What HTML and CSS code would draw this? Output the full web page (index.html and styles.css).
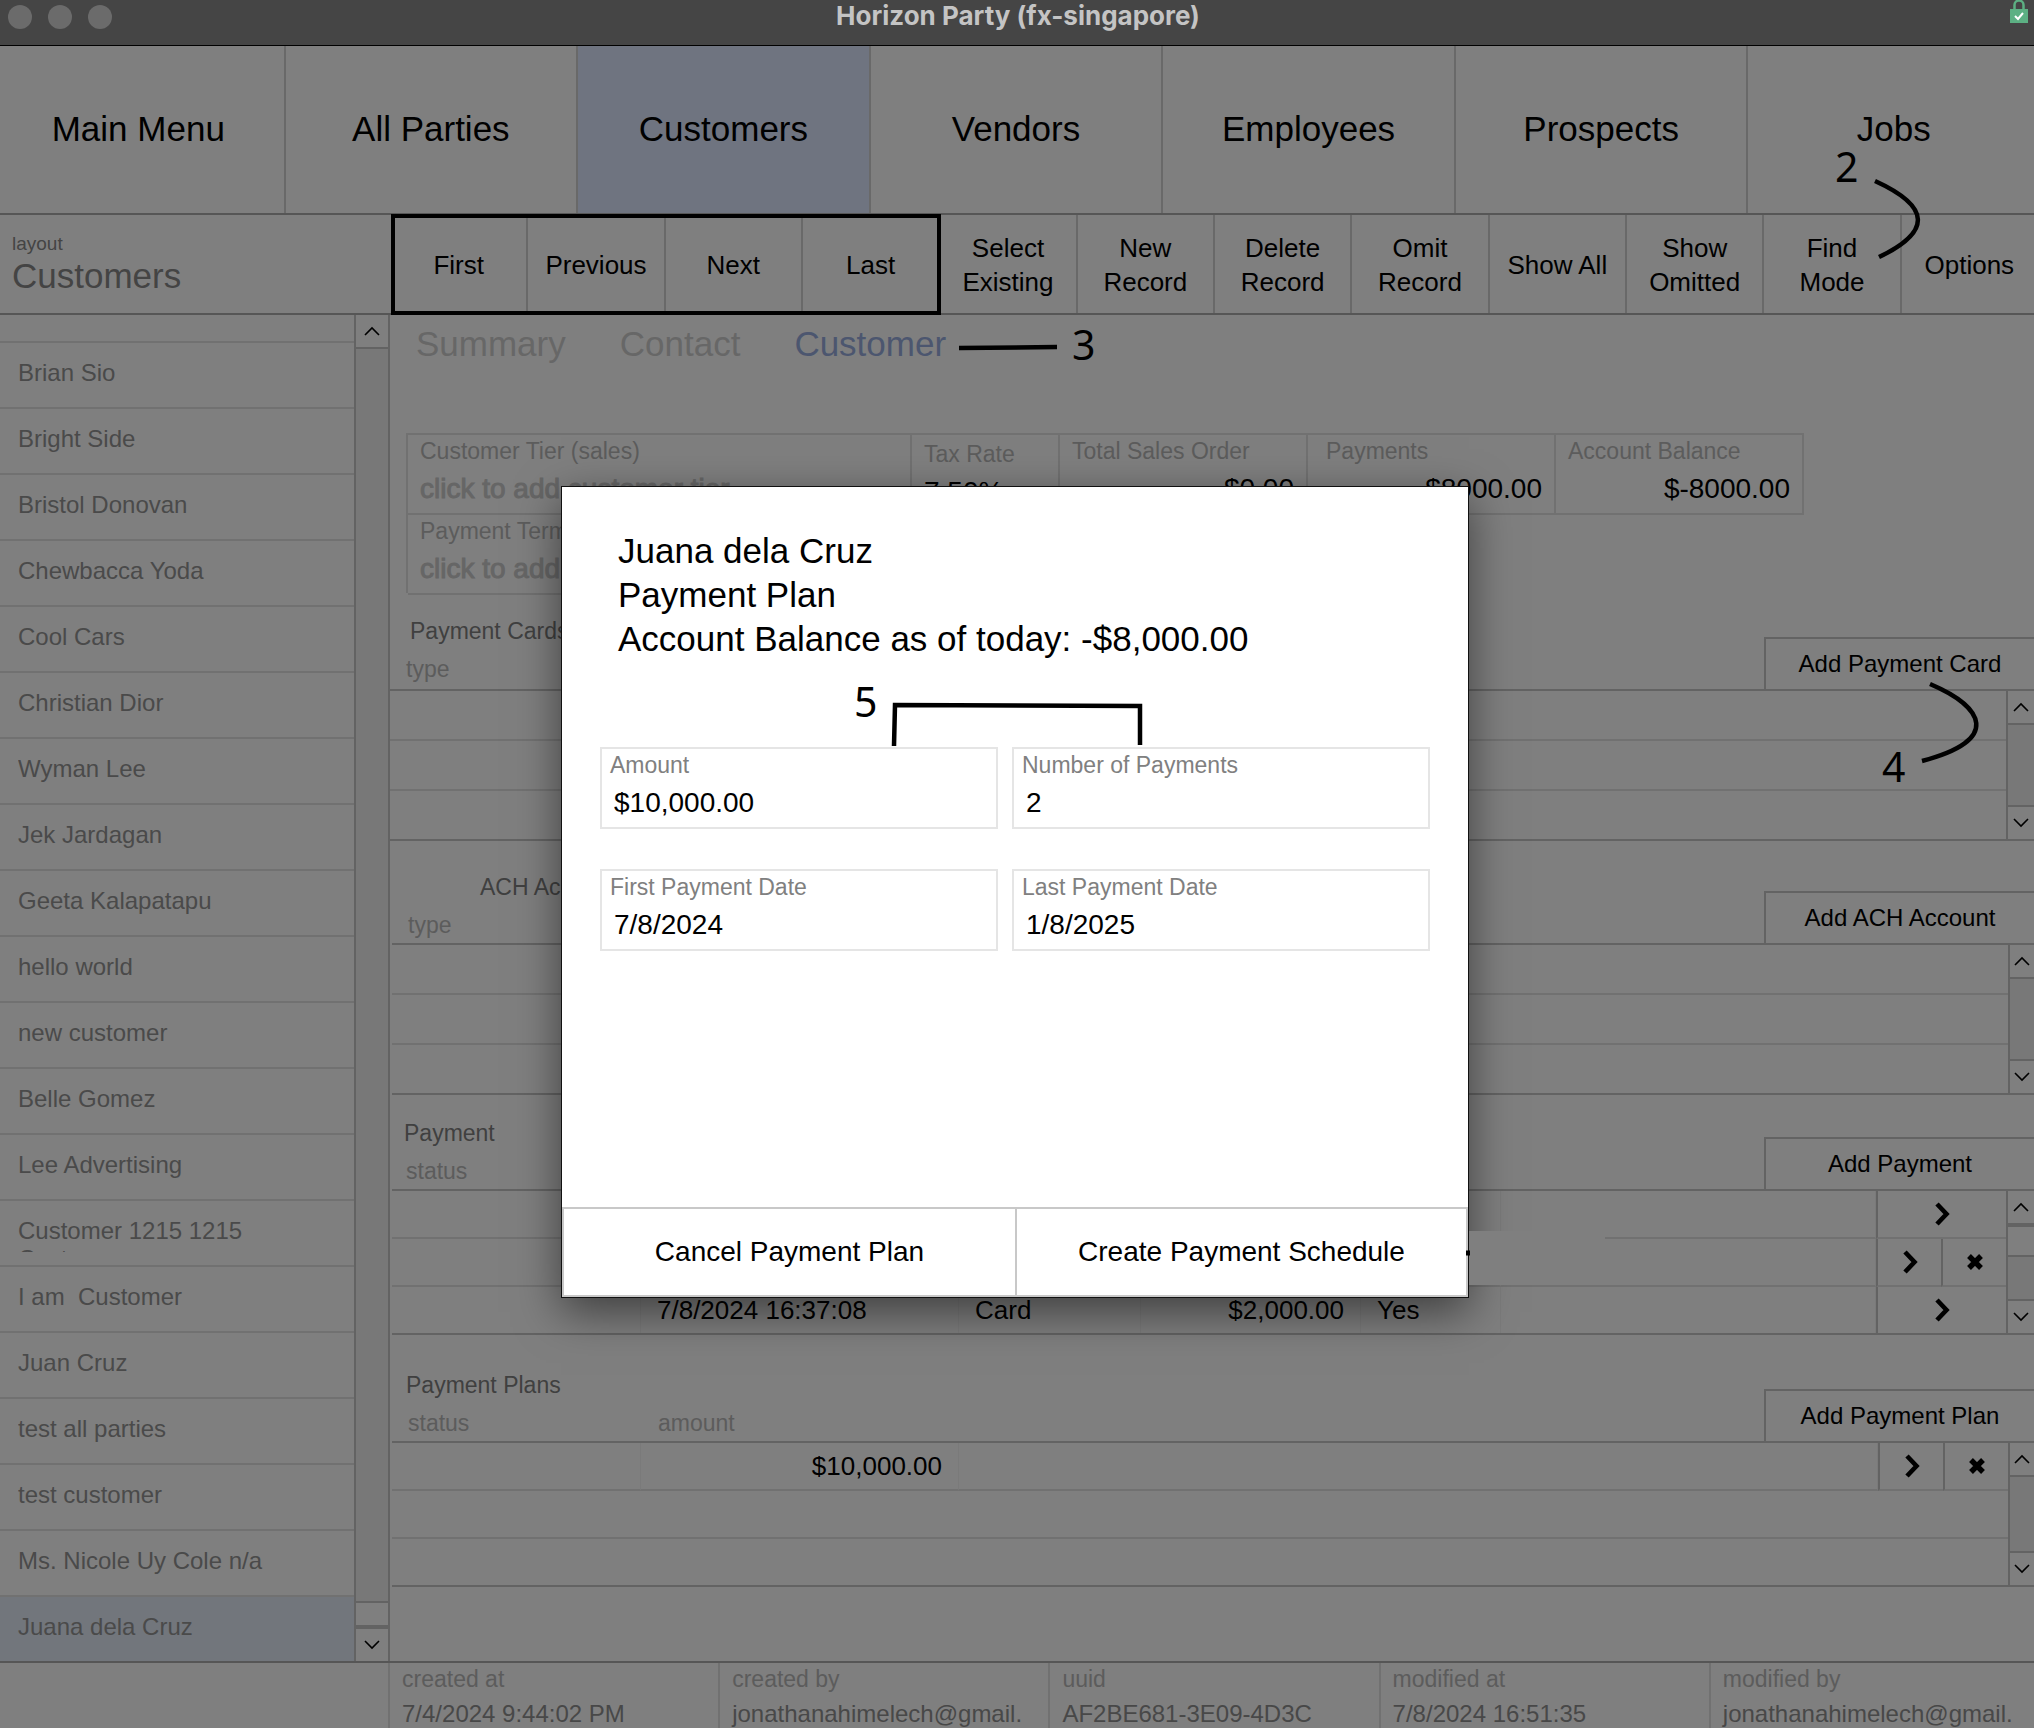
FILE: index.html
```html
<!DOCTYPE html>
<html lang="en">
<head>
<meta charset="utf-8">
<meta name="viewport" content="width=device-width, initial-scale=1">
<title>Horizon Party (fx-singapore)</title>
<link rel="stylesheet" href="styles.css">
</head>
<body>
<svg class="symbols" aria-hidden="true">
  <symbol id="up" viewBox="0 0 16 10"><path d="M1 9 8 2l7 7" fill="none" stroke="#000" stroke-width="1.6"/></symbol>
  <symbol id="down" viewBox="0 0 16 10"><path d="m1 1 7 7 7-7" fill="none" stroke="#000" stroke-width="1.6"/></symbol>
  <symbol id="go" viewBox="0 0 16 24"><path d="m3 2 9.500 10L3 22" fill="none" stroke="#000" stroke-width="4.600"/></symbol>
  <symbol id="remove" viewBox="0 0 18 18"><path d="m3 3 12 12M15 3 3 15" fill="none" stroke="#000" stroke-width="5.400"/></symbol>
</svg>

<header class="titlebar">
  <div class="lights"><span></span><span></span><span></span></div>
  <h1>Horizon Party (fx-singapore)</h1>
  <svg class="lock" viewBox="0 0 18 24" aria-label="Secure connection"><path d="M4.500 11V5a4.500 4.500 0 0 1 9 0v6" fill="none" stroke="#5cb083" stroke-width="2.500"/><rect y="9" width="18" height="14" fill="#5cb083"/><path d="m5 16 3 3 5-6" fill="none" stroke="#fff" stroke-width="2"/></svg>
</header>

<nav class="modules">
  <a href="#main">Main Menu</a>
  <a href="#parties">All Parties</a>
  <a href="#customers" class="active">Customers</a>
  <a href="#vendors">Vendors</a>
  <a href="#employees">Employees</a>
  <a href="#prospects">Prospects</a>
  <a href="#jobs">Jobs</a>
</nav>

<div class="toolbar">
  <div class="layout-name"><span>layout</span><strong>Customers</strong></div>
  <div class="actions">
    <button>First</button>
    <button>Previous</button>
    <button>Next</button>
    <button>Last</button>
    <button>Select Existing</button>
    <button>New Record</button>
    <button>Delete Record</button>
    <button>Omit Record</button>
    <button>Show All</button>
    <button>Show Omitted</button>
    <button>Find<br>Mode</button>
    <button>Options</button>
    <div class="highlight"></div>
  </div>
</div>

<div class="workspace">
  <aside class="sidebar">
    <ul class="records">
      <li class="partial"></li>
      <li><a href="#r">Brian Sio</a></li>
      <li><a href="#r">Bright Side</a></li>
      <li><a href="#r">Bristol Donovan</a></li>
      <li><a href="#r">Chewbacca Yoda</a></li>
      <li><a href="#r">Cool Cars</a></li>
      <li><a href="#r">Christian Dior</a></li>
      <li><a href="#r">Wyman Lee</a></li>
      <li><a href="#r">Jek Jardagan</a></li>
      <li><a href="#r">Geeta Kalapatapu</a></li>
      <li><a href="#r">hello world</a></li>
      <li><a href="#r">new customer</a></li>
      <li><a href="#r">Belle Gomez</a></li>
      <li><a href="#r">Lee Advertising</a></li>
      <li><a href="#r">Customer 1215 1215<br>Customer</a></li>
      <li><a href="#r">I am&nbsp; Customer</a></li>
      <li><a href="#r">Juan Cruz</a></li>
      <li><a href="#r">test all parties</a></li>
      <li><a href="#r">test customer</a></li>
      <li><a href="#r">Ms. Nicole Uy Cole n/a</a></li>
      <li class="selected"><a href="#r">Juana dela Cruz</a></li>
    </ul>
    <div class="scroll">
      <button aria-label="Scroll up"><svg><use href="#up"/></svg></button>
      <div class="track"></div>
      <div class="thumb thumb-short"></div>
      <button class="end" aria-label="Scroll down"><svg><use href="#down"/></svg></button>
    </div>
  </aside>

  <main class="detail">
    <nav class="tabs">
      <a href="#summary">Summary</a>
      <a href="#contact">Contact</a>
      <a href="#customer" class="active">Customer</a>
    </nav>

    <div class="facts">
      <div class="fact"><label for="tier">Customer Tier (sales)</label><input id="tier" placeholder="click to add customer tier"></div>
      <div class="fact fact-low"><label for="tax">Tax Rate</label><input id="tax" value="7.50%"></div>
      <div class="fact num"><label for="orders">Total Sales Order</label><input id="orders" value="$0.00"></div>
      <div class="fact num fact-wide"><label for="paid">Payments</label><input id="paid" value="$8000.00"></div>
      <div class="fact num"><label for="balance">Account Balance</label><input id="balance" value="$-8000.00"></div>
      <div class="fact second"><label for="terms">Payment Terms</label><input id="terms" placeholder="click to add payment terms"></div>
    </div>

    <section class="portal cards">
      <header>
        <div class="heads"><h2>Payment Cards</h2><p>type</p></div>
        <button class="add">Add Payment Card</button>
      </header>
      <div class="grid">
        <table><tbody><tr><td></td></tr><tr><td></td></tr><tr><td></td></tr></tbody></table>
        <div class="scroll">
          <button aria-label="Scroll up"><svg><use href="#up"/></svg></button>
          <div class="track"></div>
          <button class="end" aria-label="Scroll down"><svg><use href="#down"/></svg></button>
        </div>
      </div>
    </section>

    <section class="portal ach">
      <header>
        <div class="heads"><h2>ACH Accounts</h2><p>type</p></div>
        <button class="add">Add ACH Account</button>
      </header>
      <div class="grid">
        <table><tbody><tr><td></td></tr><tr><td></td></tr><tr><td></td></tr></tbody></table>
        <div class="scroll narrow">
          <button aria-label="Scroll up"><svg><use href="#up"/></svg></button>
          <div class="track"></div>
          <button class="end" aria-label="Scroll down"><svg><use href="#down"/></svg></button>
        </div>
      </div>
    </section>

    <section class="portal payments">
      <header>
        <div class="heads"><h2>Payment</h2><p>status</p></div>
        <button class="add">Add Payment</button>
      </header>
      <div class="grid">
        <table>
          <colgroup><col class="c-status"><col class="c-date"><col class="c-kind"><col class="c-sum"><col class="c-flag"><col><col class="c-act"><col class="c-act"></colgroup>
          <tbody>
            <tr><td></td><td></td><td></td><td></td><td></td><td></td><td class="act" colspan="2"><button aria-label="Open"><svg class="go"><use href="#go"/></svg></button></td></tr>
            <tr><td></td><td></td><td></td><td></td><td></td><td></td><td class="act"><button aria-label="Open"><svg class="go"><use href="#go"/></svg></button></td><td class="act"><button aria-label="Delete"><svg class="remove"><use href="#remove"/></svg></button></td></tr>
            <tr><td></td><td>7/8/2024 16:37:08</td><td>Card</td><td class="num">$2,000.00</td><td>Yes</td><td></td><td class="act" colspan="2"><button aria-label="Open"><svg class="go"><use href="#go"/></svg></button></td></tr>
          </tbody>
        </table>
        <div class="scroll">
          <button aria-label="Scroll up"><svg><use href="#up"/></svg></button>
          <div class="thumb"></div>
          <div class="track"></div>
          <button class="end" aria-label="Scroll down"><svg><use href="#down"/></svg></button>
        </div>
      </div>
    </section>

    <section class="portal plans">
      <header>
        <div class="heads"><h2>Payment Plans</h2><p><span>status</span>amount</p></div>
        <button class="add">Add Payment Plan</button>
      </header>
      <div class="grid">
        <table>
          <colgroup><col class="c-status"><col class="c-date"><col><col class="c-act"><col class="c-act"></colgroup>
          <tbody>
            <tr><td></td><td class="num">$10,000.00</td><td></td><td class="act"><button aria-label="Open"><svg class="go"><use href="#go"/></svg></button></td><td class="act"><button aria-label="Delete"><svg class="remove"><use href="#remove"/></svg></button></td></tr>
            <tr><td colspan="5"></td></tr>
            <tr><td colspan="5"></td></tr>
          </tbody>
        </table>
        <div class="scroll narrow">
          <button aria-label="Scroll up"><svg><use href="#up"/></svg></button>
          <div class="track"></div>
          <button class="end" aria-label="Scroll down"><svg><use href="#down"/></svg></button>
        </div>
      </div>
    </section>
  </main>
</div>

<footer class="meta">
  <dl>
    <div><dt>created at</dt><dd>7/4/2024 9:44:02 PM</dd></div>
    <div><dt>created by</dt><dd>jonathanahimelech@gmail.</dd></div>
    <div><dt>uuid</dt><dd>AF2BE681-3E09-4D3C</dd></div>
    <div><dt>modified at</dt><dd>7/8/2024 16:51:35</dd></div>
    <div><dt>modified by</dt><dd>jonathanahimelech@gmail.</dd></div>
  </dl>
</footer>

<div class="overlay">
  <form class="dialog" role="dialog" aria-labelledby="plan-title">
    <div class="dialog-body">
      <h2 id="plan-title">Juana dela Cruz<br>Payment Plan<br>Account Balance as of today: -$8,000.00</h2>
      <div class="fields">
        <div class="field"><label for="amount">Amount</label><input id="amount" value="$10,000.00"></div>
        <div class="field"><label for="count">Number of Payments</label><input id="count" value="2"></div>
        <div class="field"><label for="first">First Payment Date</label><input id="first" value="7/8/2024"></div>
        <div class="field"><label for="last">Last Payment Date</label><input id="last" value="1/8/2025"></div>
      </div>
    </div>
    <div class="dialog-actions">
      <button type="button">Cancel Payment Plan</button>
      <button type="button">Create Payment Schedule</button>
    </div>
  </form>
</div>

<svg class="callouts" width="2034" height="1728" viewBox="0 0 2034 1728">
  <rect x="1469" y="1231" width="136" height="54" fill="#7f7f7f"/>
  <path d="M1466 1253h4" stroke="#000" stroke-width="5"/>
  <g fill="none" stroke="#000" stroke-width="4.500">
    <path d="M1875 181c57 26 56 51 4 76"/>
    <path d="m959 348 98-1"/>
    <path d="M1930 684c54 23 72 56-8 77"/>
    <path d="m894 746 1-41 245 1v39"/>
  </g>
  <g class="marks">
    <text x="1835" y="182">2</text>
    <text x="1072" y="360">3</text>
    <text x="1882" y="782">4</text>
    <text x="854" y="717">5</text>
  </g>
</svg>
</body>
</html>
```

FILE: styles.css
```css
:root {
  --bg: #7f7f7f;
  --line: #636363;
  --line-soft: #717171;
  --line-faint: #7a7a7a;
  --label: #5c5c5c;
}

* { box-sizing: border-box; }

body {
  margin: 0;
  position: relative;
  overflow-x: hidden;
  background: var(--bg);
  color: #000;
  font-family: "Liberation Sans", Arial, sans-serif;
  font-size: 24px;
}

h1, h2, p, ul, dl, dd { margin: 0; padding: 0; font-weight: 400; }
a { color: inherit; text-decoration: none; }
button, input { font: inherit; color: inherit; background: none; border: 0; border-radius: 0; padding: 0; margin: 0; }
.symbols { position: absolute; width: 0; height: 0; }

/* Window title bar */
.titlebar {
  display: grid;
  grid-template-columns: 1fr auto 1fr;
  height: 46px;
  padding: 0 6px 0 8px;
  background: #454545;
  border-bottom: 1px solid #000;
}
.titlebar h1 {
  color: #c4c4c4;
  font: 700 26px/32px Inter, sans-serif;
}
.lights { display: flex; gap: 16px; padding-top: 5px; }
.lights span { width: 24px; height: 24px; border-radius: 50%; background: #6b6b6b; }
.lock { width: 18px; height: 24px; justify-self: end; }

/* Module navigation; the outer cells run past the window edges */
.modules {
  display: grid;
  grid-template-columns: repeat(7, 1fr);
  margin: 0 -7px;
  height: 169px;
  border-bottom: 2px solid #565656;
  font-size: 35px;
}
.modules a {
  display: flex;
  align-items: center;
  justify-content: center;
  padding-bottom: 2px;
  border-right: 2px solid #696969;
}
.modules .active { background: #6f7480; }

/* Record toolbar */
.toolbar { display: flex; height: 100px; border-bottom: 2px solid #565656; }
.layout-name {
  flex: 0 0 391px;
  display: flex;
  flex-direction: column;
  padding: 18px 12px 0;
  color: #444;
}
.layout-name span { font-size: 19px; line-height: 22px; }
.layout-name strong { font-size: 35px; line-height: 42px; font-weight: 400; }
.actions {
  position: relative;
  flex: 1;
  display: grid;
  grid-template-columns: repeat(12, 1fr);
  margin-right: -5px;
}
.actions button {
  padding: 2px 14px 0;
  border-right: 2px solid #696969;
  font-size: 26px;
  line-height: 34px;
}
.actions button:nth-child(-n+4), .actions button:nth-child(9), .actions button:last-of-type { padding: 2px 0 0; }
.highlight {
  position: absolute;
  inset: -1px auto -2px 0;
  width: 33.4%;
  border: 4px solid #000;
}

.workspace { display: flex; }

/* Record list */
.sidebar { flex: 0 0 390px; display: flex; border-right: 2px solid var(--line); }
.records { flex: 1; list-style: none; color: #4a4a4a; }
.records li { height: 66px; border-bottom: 2px solid var(--line-soft); padding: 16px 18px 0; }
.records .partial { height: 28px; padding: 0; }
.records .selected { height: 64px; border-bottom: 0; background: #72767c; }
.records a { display: block; line-height: 28px; max-height: 35px; overflow: hidden; }

/* Scroll bars */
.scroll {
  display: flex;
  flex-direction: column;
  flex: 0 0 28px;
  border-left: 2px solid var(--line);
}
.sidebar .scroll { flex-basis: 34px; }
.scroll.narrow { flex-basis: 26px; }
.scroll button {
  height: 34px;
  display: flex;
  align-items: center;
  justify-content: center;
  border-bottom: 2px solid var(--line);
}
.scroll .end { border-bottom: 0; border-top: 2px solid var(--line); }
.scroll svg { width: 16px; height: 10px; flex: none; }
.track { flex: 1; background: #787878; }
.thumb { height: 32px; border: solid var(--line); border-width: 2px 0; }
.thumb-short { height: 26px; }

/* Customer detail */
.detail { flex: 1; min-width: 0; }
.tabs {
  display: flex;
  gap: 54px;
  padding: 7px 26px 0;
  font-size: 35px;
  line-height: 44px;
  color: #676767;
}
.tabs .active { color: #4c566f; }

.facts {
  display: grid;
  grid-template-columns: 504fr 148fr 248fr 248fr 248fr;
  margin: 67px 230px 0 16px;
  border-left: 2px solid var(--line-soft);
}
.fact {
  height: 80px;
  padding: 2px 12px 0;
  border-top: 2px solid var(--line-soft);
  border-right: 2px solid var(--line-soft);
  box-shadow: 0 2px var(--line-soft);
}
.fact-low { padding-top: 5px; }
.fact label { display: block; font-size: 23px; line-height: 28px; color: var(--label); }
.fact-wide label { padding-left: 6px; }
.fact input { display: block; width: 100%; height: 48px; font-size: 28px; line-height: 48px; }
.fact.num input { text-align: right; }
.fact input::placeholder { color: #666; opacity: 1; -webkit-text-stroke: 1px #666; }

.portal { margin-top: 24px; }
.portal header {
  display: flex;
  justify-content: space-between;
  align-items: flex-end;
  height: 72px;
}
.heads { font-size: 23px; line-height: 28px; padding: 0 0 4px 14px; color: var(--label); }
.heads h2 { font-size: 23px; color: #404040; margin-bottom: 10px; }
.heads p { padding-left: 2px; }
.heads span { display: inline-block; width: 250px; }
.cards .heads { padding-bottom: 6px; }
.cards .heads h2 { padding-left: 6px; }
.ach .heads h2 { padding-left: 74px; }
.add {
  width: 270px;
  height: 52px;
  border: solid var(--line);
  border-width: 2px 0 0 2px;
}
.ach { margin-top: 30px; }
.payments { margin-top: 22px; }
.ach, .payments { padding-left: 2px; }
.payments .heads { padding-left: 12px; }
.plans { margin-top: 34px; padding: 0 0 72px 2px; }
.grid { display: flex; border: solid var(--line); border-width: 2px 0; }
table { flex: 1; table-layout: fixed; width: 100%; border-spacing: 0; font-size: 26px; }
td { height: 50px; padding: 0 16px; border-bottom: 2px solid var(--line-soft); }
tr:last-child td { height: 48px; border-bottom: 0; }
.payments td, .plans td { height: 48px; border-right: 1px solid var(--line-faint); }
.payments tr:last-child td, .plans tr:last-child td { height: 46px; }
td:last-child, .plans td:last-child { border-right: 0; }
td.num { text-align: right; }
td.act { padding: 0; border-left: 2px solid var(--line); border-right: 0; }
.act button { display: flex; align-items: center; justify-content: center; width: 100%; height: 46px; }
.go { width: 16px; height: 24px; }
.remove { width: 18px; height: 18px; }
.c-status { width: 249px; }
.c-date { width: 318px; }
.c-kind { width: 182px; }
.c-sum { width: 220px; }
.c-flag { width: 140px; }
.c-act { width: 65px; }

/* Record metadata */
.meta { border-top: 2px solid #565656; overflow: hidden; }
.meta dl {
  display: grid;
  grid-template-columns: repeat(5, 1fr);
  margin: 0 -5px 0 388px;
}
.meta dl div { padding: 2px 12px 0; border-left: 2px solid var(--line-soft); min-width: 0; }
.meta dt { font-size: 23px; line-height: 28px; color: var(--label); }
.meta dd { margin-top: 6px; line-height: 29px; color: #484848; white-space: nowrap; }

/* Payment plan dialog */
.overlay {
  position: absolute;
  inset: 0;
  display: flex;
  justify-content: center;
  align-items: flex-start;
  padding: 486px 4px 0 0;
}
.dialog {
  width: 908px;
  background: #fff;
  border: 1px solid #111;
  box-shadow: 0 14px 42px rgba(0, 0, 0, 0.5);
}
.dialog-body { min-height: 720px; padding: 42px 38px 0; }
.dialog h2 { padding-left: 18px; font-size: 35px; line-height: 44px; }
.fields {
  display: grid;
  grid-template-columns: 398fr 418fr;
  gap: 40px 14px;
  margin-top: 86px;
}
.field { height: 82px; padding: 2px 8px 0; border: 2px solid #e5e5e5; }
.field label { display: block; font-size: 23px; line-height: 28px; color: #808080; }
.field input { display: block; width: 100%; height: 48px; padding-left: 4px; font-size: 28px; line-height: 48px; }
.dialog-actions { display: grid; grid-template-columns: 1fr 1fr; border: 2px solid #c8c8c8; }
.dialog-actions button { height: 86px; font-size: 28px; }
.dialog-actions button + button { border-left: 2px solid #c8c8c8; }

/* Numbered callouts drawn over the screen */
.callouts { position: absolute; top: 0; left: 0; pointer-events: none; }
.marks { font: 41px "Noto Sans", sans-serif; }
```
